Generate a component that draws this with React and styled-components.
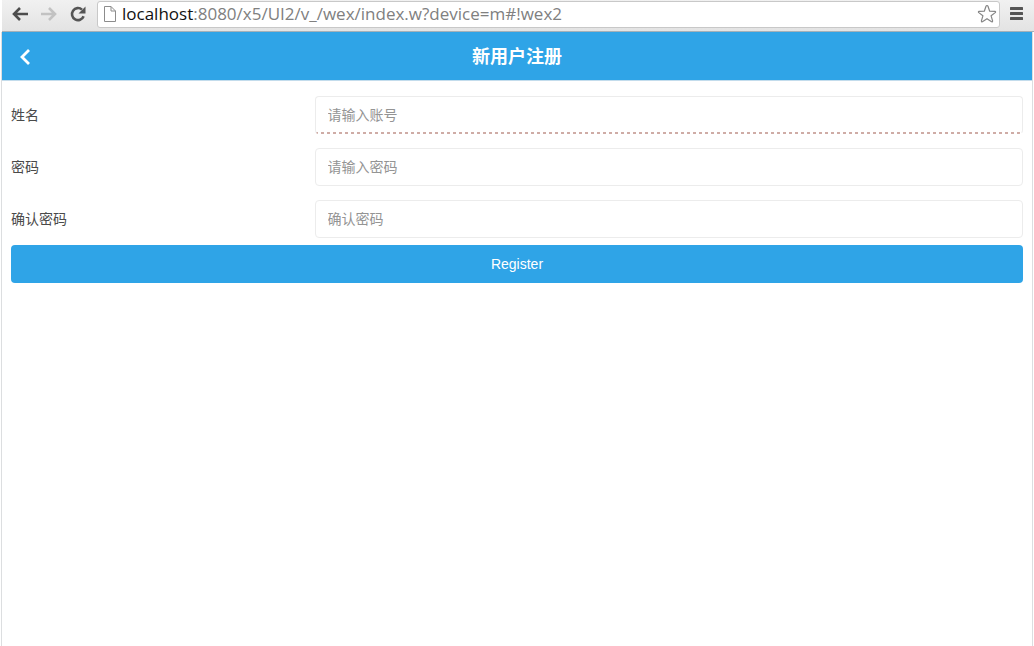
import React from 'react';
import styled, { createGlobalStyle, css } from 'styled-components';

const GlobalStyle = createGlobalStyle`
  * {
    box-sizing: border-box;
  }

  body {
    margin: 0;
    background-color: #ffffff;
    font-family: 'Liberation Sans', 'Noto Sans CJK SC', sans-serif;
    font-size: 14px;
    color: #4a4a4a;
  }
`;

const Page = styled.div`
  display: flex;
  flex-direction: column;
  min-height: 100vh;
`;

const Toolbar = styled.div`
  display: flex;
  align-items: center;
  gap: 9px;
  height: 32px;
  margin-left: 2px;
  padding: 0 10px 3px 8px;
  background: linear-gradient(#f1f1f1, #e3e3e3);
  border-bottom: 1px solid #a4b0b8;
`;

const ToolButton = styled.button`
  display: flex;
  align-items: center;
  justify-content: center;
  width: ${(props) => (props.$narrow ? '15px' : '20px')};
  height: 20px;
  padding: 0;
  border: none;
  background: none;
`;

const AddressBar = styled.div`
  flex: 1;
  display: flex;
  align-items: center;
  gap: 5px;
  min-width: 0;
  height: 27px;
  padding: 0 2px 0 5px;
  background-color: #ffffff;
  border: 1px solid #c8c8c8;
  border-radius: 3px;
`;

const Url = styled.div`
  flex: 1;
  min-width: 0;
  overflow: hidden;
  white-space: nowrap;
  font-family: 'Open Sans', 'Noto Sans', sans-serif;
  font-size: 17px;
  line-height: 24px;
  color: #808080;
`;

const Host = styled.span`
  color: #111111;
`;

const Content = styled.div`
  flex: 1;
  margin: 0 1px;
  border: solid #dcdee0;
  border-width: 0 1px;
`;

const TitleBar = styled.header`
  display: grid;
  grid-template-columns: 46px 1fr 46px;
  align-items: center;
  height: 49px;
  padding-top: 2px;
  background-color: #2fa4e7;
  border-bottom: 1px solid #c3dcec;
`;

const BackButton = styled.button`
  display: flex;
  align-items: center;
  justify-content: center;
  height: 46px;
  padding: 0;
  border: none;
  background: none;
`;

const Title = styled.h1`
  margin: 0;
  font-size: 18px;
  line-height: 46px;
  font-weight: bold;
  text-align: center;
  color: #ffffff;
`;

const Form = styled.form`
  padding: 8px 9px;
`;

const Row = styled.div`
  display: grid;
  grid-template-columns: 30% 1fr;
  align-items: center;
  padding: 7px 0;
`;

const Label = styled.label`
  line-height: 20px;
`;

const Input = styled.input`
  width: 100%;
  height: 38px;
  padding: 0 12px;
  border: 1px solid #ececec;
  border-radius: 4px;
  background-color: #ffffff;
  font-family: inherit;
  font-size: 14px;
  color: #555555;
  outline: none;

  &::placeholder {
    color: #949494;
    opacity: 1;
  }

  /* dashed underline for a required field */
  ${(props) =>
    props.$invalid &&
    css`
      border-bottom-color: transparent;
      background-image: repeating-linear-gradient(90deg, #cfaca6 0 3px, #ffffff 3px 6px);
      background-size: 100% 2px;
      background-position: left bottom;
      background-repeat: no-repeat;
      background-clip: border-box;
      background-origin: border-box;
    `}
`;

const RegisterButton = styled.button`
  display: block;
  width: 100%;
  height: 38px;
  border: none;
  border-radius: 4px;
  background-color: #2fa4e7;
  font-family: inherit;
  font-size: 14px;
  color: #ffffff;
`;

const BackArrow = ({ color }) => (
  <svg width="18" height="16" viewBox="0 0 18 16" fill="none" stroke={color} strokeWidth="2.6">
    <path d="M9 2L3 8l6 6M3.5 8H17" />
  </svg>
);

const ForwardArrow = ({ color }) => (
  <svg width="18" height="16" viewBox="0 0 18 16" fill="none" stroke={color} strokeWidth="2.6">
    <path d="M9 2l6 6-6 6M14.5 8H1" />
  </svg>
);

const ReloadIcon = () => (
  <svg width="18" height="18" viewBox="0 0 18 18">
    <path d="M14.6 11.2A6 6 0 1 1 13 4.6" fill="none" stroke="#555555" strokeWidth="2.6" />
    <path d="M16.5 1.5v7h-7z" fill="#555555" />
  </svg>
);

const PageIcon = () => (
  <svg width="14" height="18" viewBox="0 0 14 18" fill="#ffffff" stroke="#8c8c8c">
    <path d="M1.5 1.5h6.5l4.5 4.5v10.5h-11zM8 1.5v4.5h4.5" />
  </svg>
);

const StarIcon = () => (
  <svg width="20" height="20" viewBox="0 0 20 20" fill="#ffffff" stroke="#858585" strokeWidth="1.2" strokeLinejoin="round">
    <path d="M10 1.5q.7 0 1 .8l1.7 4.9 5.2.2q1.2.2.3 1.2l-4.1 3.2 1.5 5.1q.1 1.2-1 .8L10 14.7l-4.6 3q-1.1.4-1-.8l1.5-5.100-4.100-3.200q-.9-1 .3-1.200l5.200-.2L9 2.300q.3-.8 1-.8z" />
  </svg>
);

const MenuIcon = () => (
  <svg width="13" height="14" viewBox="0 0 13 14" fill="#555555">
    <rect y="0" width="13" height="3" rx="0.5" />
    <rect y="5" width="13" height="3" rx="0.5" />
    <rect y="10" width="13" height="3" rx="0.5" />
  </svg>
);

const ChevronIcon = () => (
  <svg width="12" height="16" viewBox="0 0 12 16" fill="none" stroke="#ffffff" strokeWidth="2.8">
    <path d="M10 1L3 8l7 7" />
  </svg>
);

const fields = [
  { id: 'name', label: '姓名', placeholder: '请输入账号', type: 'text', invalid: true },
  { id: 'password', label: '密码', placeholder: '请输入密码', type: 'password' },
  { id: 'confirm', label: '确认密码', placeholder: '确认密码', type: 'password' },
];

const App = () => {
  return (
    <Page>
      <GlobalStyle />
      <Toolbar>
        <ToolButton type="button" aria-label="Back"><BackArrow color="#4d4d4d" /></ToolButton>
        <ToolButton type="button" aria-label="Forward"><ForwardArrow color="#c2c2c2" /></ToolButton>
        <ToolButton type="button" aria-label="Reload"><ReloadIcon /></ToolButton>
        <AddressBar>
          <PageIcon />
          <Url><Host>localhost</Host>:8080/x5/UI2/v_/wex/index.w?device=m#!wex2</Url>
          <ToolButton type="button" aria-label="Bookmark"><StarIcon /></ToolButton>
        </AddressBar>
        <ToolButton type="button" aria-label="Menu" $narrow><MenuIcon /></ToolButton>
      </Toolbar>
      <Content>
        <TitleBar>
          <BackButton type="button" aria-label="返回"><ChevronIcon /></BackButton>
          <Title>新用户注册</Title>
        </TitleBar>
        <Form onSubmit={(e) => e.preventDefault()}>
          {fields.map((field) => (
            <Row key={field.id}>
              <Label htmlFor={field.id}>{field.label}</Label>
              <Input id={field.id} type={field.type} placeholder={field.placeholder} $invalid={field.invalid} />
            </Row>
          ))}
          <RegisterButton type="submit">Register</RegisterButton>
        </Form>
      </Content>
    </Page>
  );
};

export default App;
